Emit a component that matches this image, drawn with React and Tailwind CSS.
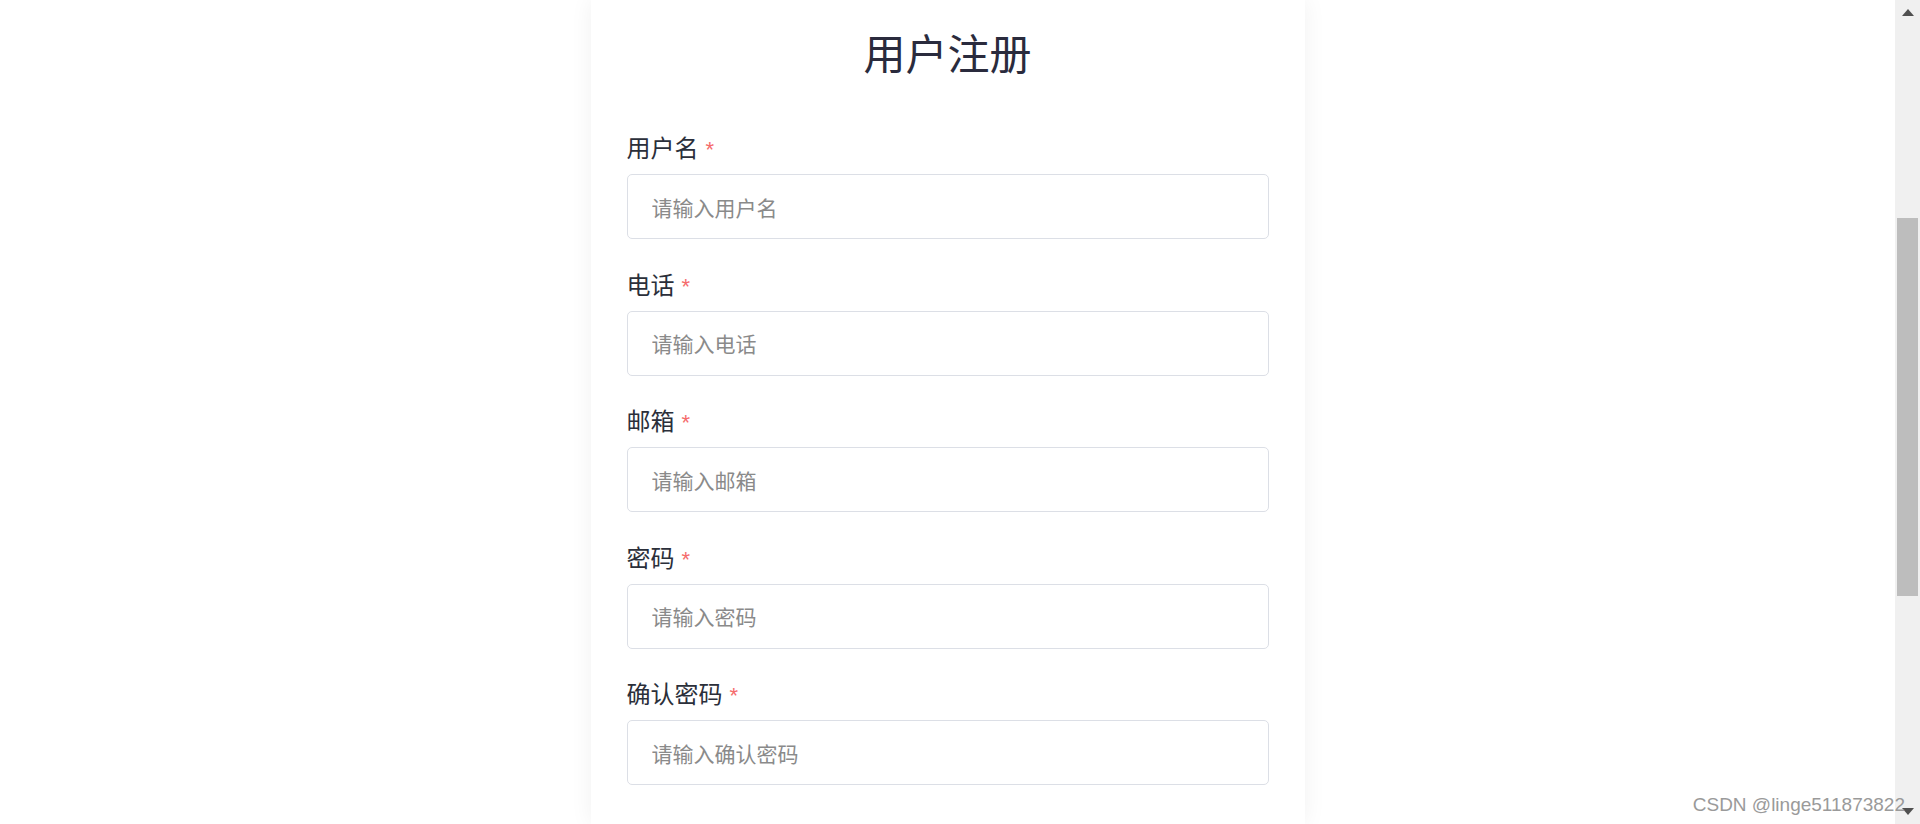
import React from 'react';

const fields = [
  { label: '用户名', placeholder: '请输入用户名' },
  { label: '电话', placeholder: '请输入电话' },
  { label: '邮箱', placeholder: '请输入邮箱' },
  { label: '密码', placeholder: '请输入密码' },
  { label: '确认密码', placeholder: '请输入确认密码' },
];

const cjk = { fontFamily: '"Noto Sans CJK SC", "Noto Sans", sans-serif' };

const Field = ({ label, placeholder }) => (
  <div className="mb-[27.5px]">
    <label className="flex h-[34px] items-baseline text-[24px] leading-[34px] text-[#2b2f3a]">
      <span>{label}</span>
      <span
        className="ml-[7px] text-[22px] text-[#f56c6c]"
        style={{ fontFamily: '"Liberation Sans", Arial, sans-serif' }}
      >
        *
      </span>
    </label>
    <input
      type="text"
      placeholder={placeholder}
      className="mt-[10px] box-border h-[65px] w-full rounded-[5px] border border-[#dcdfe6] bg-white px-[24px] text-[21px] text-[#606266] outline-none placeholder:text-[#8a8a8a]"
      style={cjk}
    />
  </div>
);

export default function App() {
  return (
    <div className="relative flex h-[824px] w-full overflow-hidden bg-white" style={cjk}>
      <main className="flex flex-1 justify-center">
        {/* register card */}
        <div className="w-[714px] bg-white px-[36px] shadow-[0_0_22px_rgba(0,0,0,0.06)]">
          <div className="flex h-[104px] items-center justify-center">
            <h1 className="text-[42px] font-normal leading-[60px] text-[#2a2b3d]">用户注册</h1>
          </div>
          <form className="pt-[26px]">
            {fields.map(f => (
              <Field key={f.label} {...f} />
            ))}
          </form>
        </div>
      </main>

      {/* fake scrollbar */}
      <div className="flex w-[25px] flex-col bg-[#f0f0f0]">
        <div className="flex h-[25px] items-center justify-center">
          <svg width="12" height="7" viewBox="0 0 12 7">
            <path d="M6 0 L12 7 L0 7 Z" fill="#505050" />
          </svg>
        </div>
        <div className="mx-auto mt-[193px] h-[378px] w-[21px] bg-[#bdbdbd]" />
        <div className="flex-1" />
        <div className="flex h-[25px] items-center justify-center">
          <svg width="12" height="7" viewBox="0 0 12 7">
            <path d="M0 0 L12 0 L6 7 Z" fill="#505050" />
          </svg>
        </div>
      </div>

      <span
        className="absolute bottom-[8px] right-[15px] text-[19px] leading-[22px] text-[#9a9a9a]"
        style={{ fontFamily: '"Liberation Sans", Arial, sans-serif' }}
      >
        CSDN @linge511873822
      </span>
    </div>
  );
}
